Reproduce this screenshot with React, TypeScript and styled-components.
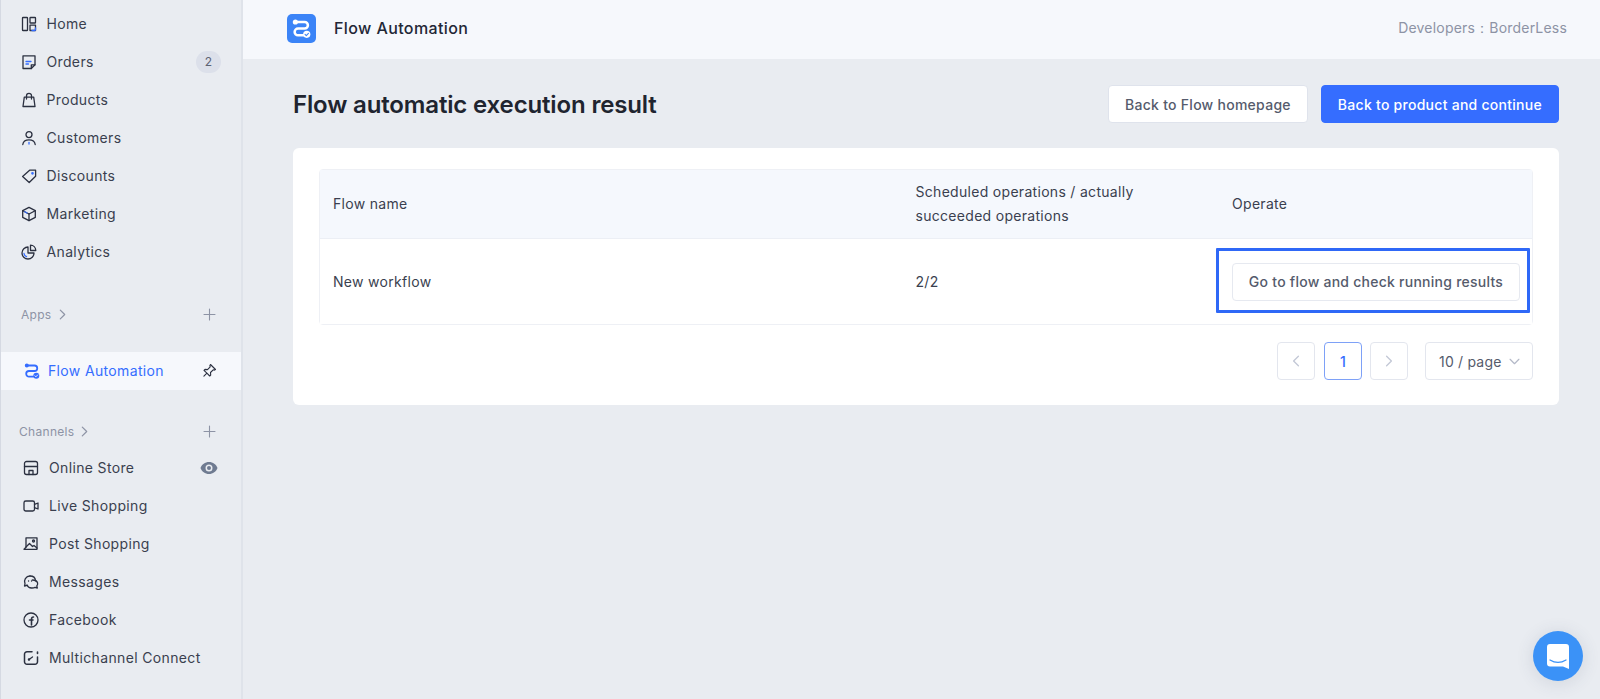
import React from "react";
import styled, { createGlobalStyle } from "styled-components";

const Global = createGlobalStyle`
  html, body { margin: 0; padding: 0; height: 100%; background: #e9ecf1; }
  #root { height: 100%; }
  * { box-sizing: border-box; }
  body { font-family: Inter, "Noto Sans", sans-serif; font-size: 14px; color: #2b3040; overflow: hidden; }
`;

const Shell = styled.div`
  display: flex;
  width: 1600px;
  height: 699px;
`;
const Sidebar = styled.aside`
  width: 243px;
  height: 699px;
  flex: none;
  padding-top: 5px;
  background: #e9ecf1;
  border-left: 1px solid #d5d9e2;
  border-right: 2px solid #dfe3ea;
`;
const NavRow = styled.div<{ $indent?: number; $active?: boolean; $right?: number }>`
  height: 38px;
  display: flex;
  align-items: center;
  padding-left: ${(p) => p.$indent ?? 20}px;
  padding-right: ${(p) => p.$right ?? 20}px;
  color: ${(p) => (p.$active ? "#356dff" : "#3a3f4f")};
  background: ${(p) => (p.$active ? "#f6f8fc" : "transparent")};
  font-size: 14px;
  line-height: 20px;
`;
const NavIcon = styled.svg<{ $gap?: number }>`
  width: 16px;
  height: 16px;
  flex: none;
  margin-right: ${(p) => p.$gap ?? 9.5}px;
  fill: none;
  stroke: #2b3040;
  stroke-width: 1.3;
  stroke-linejoin: round;
  stroke-linecap: round;
`;
const NavLabel = styled.span`
  flex: 1;
  letter-spacing: 0.35px;
`;
const Count = styled.span`
  width: 25px;
  height: 22px;
  border-radius: 11px;
  background: #dce0ea;
  color: #5c6273;
  font-size: 12px;
  display: flex;
  align-items: center;
  justify-content: center;
`;
const SectionHead = styled.div<{ $top: number; $bottom: number; $indent: number }>`
  height: 20px;
  margin-top: ${(p) => p.$top}px;
  margin-bottom: ${(p) => p.$bottom}px;
  padding-left: ${(p) => p.$indent}px;
  padding-right: 25px;
  display: flex;
  align-items: center;
  justify-content: space-between;
  color: #8d93a5;
  font-size: 12px;
  letter-spacing: 0.3px;
`;
const HeadLabel = styled.span`
  display: flex;
  align-items: center;
  gap: 5px;
`;
const Small = styled.svg`
  fill: none;
  stroke: #8d93a5;
  stroke-width: 1.1;
  stroke-linecap: round;
  stroke-linejoin: round;
  flex: none;
`;

const Main = styled.main`
  flex: 1;
  display: flex;
  flex-direction: column;
  min-width: 0;
`;
const TopBar = styled.header`
  height: 59px;
  flex: none;
  background: #f6f8fc;
  display: flex;
  align-items: center;
  padding: 0 33px 3px 44px;
`;
const TopTitle = styled.span`
  flex: 1;
  margin-left: 18px;
  font-size: 16px;
  font-weight: 500;
  letter-spacing: 0.4px;
  color: #232736;
`;
const Dev = styled.span`
  color: #8d93a5;
  font-size: 14px;
  letter-spacing: 0.2px;
`;
const Content = styled.div`
  padding: 26px 41px 0 50px;
`;
const Head = styled.div`
  display: flex;
  align-items: center;
  height: 38px;
`;
const Title = styled.h1`
  flex: 1;
  margin: 1px 0 0;
  font-size: 24px;
  line-height: 38px;
  font-weight: 600;
  letter-spacing: -0.15px;
  color: #20242f;
`;
const Btn = styled.button<{ $primary?: boolean }>`
  height: 38px;
  margin-left: 13px;
  padding: 0 16px;
  border-radius: 4px;
  font: 500 14px Inter, sans-serif;
  letter-spacing: 0.27px;
  background: ${(p) => (p.$primary ? "#356dff" : "#fff")};
  color: ${(p) => (p.$primary ? "#fff" : "#555b6c")};
  border: 1px solid ${(p) => (p.$primary ? "#356dff" : "#dfe3ec")};
`;
const Card = styled.section`
  margin-top: 25px;
  background: #fff;
  border-radius: 6px;
  height: 257px;
  padding: 21px 26px 0;
`;
const Table = styled.div`
  border: 1px solid #eef0f5;
  border-radius: 4px;
  height: 156px;
`;
const Row = styled.div<{ $head?: boolean }>`
  display: grid;
  grid-template-columns: 582.5px 316.5px 1fr;
  align-items: center;
  height: ${(p) => (p.$head ? 69 : 85)}px;
  background: ${(p) => (p.$head ? "#f5f8fd" : "#fff")};
  border-bottom: ${(p) => (p.$head ? "1px solid #eceff5" : "none")};
  color: #3a3f4f;
  font-size: 14px;
  line-height: 24px;
`;
const Cell = styled.div`
  padding-left: 13px;
  letter-spacing: 0.3px;
`;
const OpCell = styled.div`
  position: relative;
  padding-left: 13px;
`;
const Highlight = styled.div`
  position: absolute;
  left: -3px;
  top: -15px;
  width: 314px;
  height: 65px;
  border: 3px solid #2f68f7;
  border-radius: 1px;
  pointer-events: none;
`;
const RowBtn = styled.button`
  width: 288px;
  height: 38px;
  border: 1px solid #e6e9f0;
  border-radius: 4px;
  background: #fff;
  color: #555b6c;
  font: 500 14px Inter, sans-serif;
  letter-spacing: 0.25px;
  padding: 0;
`;
const Pager = styled.div`
  display: flex;
  justify-content: flex-end;
  margin-top: 17px;
`;
const PageBox = styled.div<{ $active?: boolean }>`
  width: 38px;
  height: 38px;
  margin-left: ${(p) => (p.$active ? 9 : 8)}px;
  border: 1px solid ${(p) => (p.$active ? "#7ea1f7" : "#e3e6ee")};
  border-radius: 4px;
  display: flex;
  align-items: center;
  justify-content: center;
  color: #356dff;
  font-size: 14px;
  font-weight: 500;
`;
const SizeBox = styled.div`
  width: 108px;
  height: 38px;
  margin-left: 17px;
  border: 1px solid #e3e6ee;
  border-radius: 4px;
  display: flex;
  align-items: center;
  justify-content: space-between;
  padding: 0 12px 0 13px;
  color: #555b6c;
  font-size: 14px;
  letter-spacing: 0.2px;
`;
const Chat = styled.div`
  position: fixed;
  left: 1533px;
  top: 631px;
  width: 50px;
  height: 50px;
  border-radius: 50%;
  background: #3b92f7;
  box-shadow: 0 2px 18px rgba(60, 70, 100, 0.14);
  display: flex;
  align-items: center;
  justify-content: center;
`;
const ChatGlyph = styled.svg`
  width: 22px;
  height: 25px;
`;

const Blue = "#356dff";

const Flowmark = ({ color, check, weight }: { color: string; check: string; weight: number }) => (
  <g fill="none" stroke={color} strokeWidth={weight} strokeLinecap="round" strokeLinejoin="round">
    <path d="M3 2.500h7.500a2.700 2.700 0 0 1 0 5.500H5a2.800 2.800 0 0 0 0 5.600h4.500" />
    <circle cx="2.800" cy="2.500" r="1.100" fill={color} />
    <circle cx="12.300" cy="12.800" r="3" fill={color} stroke="none" />
    <path d="M10.900 12.800l1 1 1.800-1.900" stroke={check} strokeWidth="0.9" />
  </g>
);

const items: [string, React.ReactNode, React.ReactNode?][] = [
  ["Home", <><rect x="1.500" y="1.500" width="5" height="13" rx="0.6" /><rect x="9" y="1.500" width="5.500" height="5.500" rx="0.6" /><path d="M9 9.200h5.500v5.300H9z" /><path d="M11 14.500h2.500a1 1 0 0 0 1-1V12" stroke={Blue} /></>],
  ["Orders", <><path d="M2 1.800h12v9l-3.700 3.700H2z" /><path d="M10.300 14.500v-3.700H14" /><path d="M5 7.500h5M5 10h2.500" stroke={Blue} /></>, <Count>2</Count>],
  ["Products", <><path d="M3.300 5.200h9.400l1.300 9.300H2z" /><path d="M5.500 7V3.800a2.500 2.500 0 0 1 5 0V7" /></>],
  ["Customers", <><circle cx="8" cy="4.600" r="3" /><path d="M1.800 14.500c.4-3.200 2.800-4.600 6.200-4.600s5.800 1.400 6.200 4.600" /><path d="M8 12.500v1.500" stroke={Blue} /></>],
  ["Discounts", <><path d="M8.600 2.200h6v6l-6.400 6.300L1.600 8.500z" /><circle cx="11.500" cy="5.300" r="0.7" stroke={Blue} /></>],
  ["Marketing", <><path d="M8 1.300l6.300 3.300v6.800L8 14.700l-6.300-3.300V4.600z" /><path d="M8 14.500V8" /><path d="M1.800 4.700L8 8l6.200-3.300" /><path d="M3.800 5.800L6 7" stroke={Blue} /></>],
  ["Analytics", <><path d="M7 3a6 6 0 1 0 6 6H7z" /><path d="M9.500 1.200a5.500 5.500 0 0 1 5.300 5.300H9.500z" /><path d="M3 9.500a4 4 0 0 0 2.500 3.200" stroke={Blue} /></>],
];

const channels: [string, React.ReactNode, React.ReactNode?][] = [
  ["Online Store", <><path d="M3.500 1.500h9a2 2 0 0 1 2 2v3h-13v-3a2 2 0 0 1 2-2z" /><path d="M1.500 6.500v6a2 2 0 0 0 2 2h9a2 2 0 0 0 2-2v-6" /><path d="M6 14.500v-4h4v4" /></>,
    <svg width="18" height="12" viewBox="0 0 18 12"><path d="M9 0C5 0 1.800 2.500.5 6c1.300 3.500 4.500 6 8.500 6s7.200-2.500 8.500-6C16.200 2.500 13 0 9 0zm0 9.500A3.500 3.500 0 1 1 9 2.500a3.500 3.500 0 0 1 0 7z" fill="#6f7b91" /><circle cx="9" cy="6" r="2" fill="#6f7b91" /></svg>],
  ["Live Shopping", <><rect x="1" y="3" width="10.500" height="10" rx="1.800" /><path d="M11.500 6.300l3.500-1.300v6l-3.500-1.300" /></>],
  ["Post Shopping", <><path d="M3 1.800h11v11.500H1l2-2V1.800z" /><circle cx="10.500" cy="5" r="1" /><path d="M3 11l3.500-3.500 3 3 1.500-1 3 2.500" /></>],
  ["Messages", <><path d="M7 2a5.500 5.500 0 0 0-5 7.800L1.500 12 4 11.300" /><path d="M7 2c3 0 5.300 2 5.500 4.800" /><path d="M4 11a5 5 0 0 0 5 3c1.300 0 2.300-.2 3-.6l2.300.6-.5-2c.8-1 1-2 .8-3-.5-2-2.500-3-5.300-3" /><path d="M5.500 7h.1M8.500 7h.1" /></>],
  ["Facebook", <><circle cx="8" cy="8" r="7" /><path d="M8.500 13V7.200c0-1.400.6-2.200 2-2.200M6.500 8h3.500" strokeWidth="1.600" /></>],
  ["Multichannel Connect", <><path d="M9 1.800H4a2.500 2.500 0 0 0-2.500 2.500v7.500A2.500 2.500 0 0 0 4 14.300h8a2.500 2.500 0 0 0 2.500-2.500V7" strokeWidth="1.500" /><path d="M14.500 2v1.500" strokeWidth="1.600" /><path d="M6 9.500l3.500-2.500" /><circle cx="6" cy="9.500" r="0.600" /></>],
];

const Chevron = ({ dir, color, size = 10 }: { dir: "l" | "r" | "d"; color: string; size?: number }) => (
  <svg width={size} height={size} viewBox="0 0 10 10" fill="none" stroke={color} strokeWidth="1.100" strokeLinecap="round" strokeLinejoin="round">
    <path d={dir === "l" ? "M7 1L3 5l4 4" : dir === "r" ? "M3 1l4 4-4 4" : "M1 3l4 4 4-4"} />
  </svg>
);

const Plus = () => (
  <Small width="13" height="13" viewBox="0 0 13 13"><path d="M6.500 1v11M1 6.500h11" /></Small>
);

export default function App() {
  return (
    <Shell>
      <Global />
      <Sidebar>
        {items.map(([label, icon, extra]) => (
          <NavRow key={label}>
            <NavIcon viewBox="0 0 16 16">{icon}</NavIcon>
            <NavLabel>{label}</NavLabel>
            {extra}
          </NavRow>
        ))}
        <SectionHead $top={33} $bottom={28} $indent={20}>
          <HeadLabel>Apps <Chevron dir="r" color="#8d93a5" size={11} /></HeadLabel>
          <Plus />
        </SectionHead>
        <NavRow $active $indent={23} $right={24}>
          <NavIcon viewBox="0 0 16 16" $gap={8} style={{ stroke: "none" }}>
            <Flowmark color={Blue} check="#f6f8fc" weight={1.8} />
          </NavIcon>
          <NavLabel>Flow Automation</NavLabel>
          <svg width="16" height="16" viewBox="0 0 16 16" fill="none" stroke="#2b3040" strokeWidth="1.100" strokeLinejoin="round" strokeLinecap="round">
            <path d="M9.500 1.500l5 5-1 .6-1.300-.3-2.700 2.700.2 2.500-1 1-2.800-2.800-3 3 3-3L3 7.400l1-1 2.500.2 2.700-2.700-.3-1.300z" />
          </svg>
        </NavRow>
        <SectionHead $top={31} $bottom={8} $indent={18}>
          <HeadLabel>Channels <Chevron dir="r" color="#8d93a5" size={11} /></HeadLabel>
          <Plus />
        </SectionHead>
        {channels.map(([label, icon, extra]) => (
          <NavRow key={label} $indent={22} $right={23}>
            <NavIcon viewBox="0 0 16 16" $gap={10}>{icon}</NavIcon>
            <NavLabel>{label}</NavLabel>
            {extra}
          </NavRow>
        ))}
      </Sidebar>
      <Main>
        <TopBar>
          <svg width="29" height="29" viewBox="0 0 29 29">
            <rect width="29" height="29" rx="5" fill="#3b84f7" />
            <g transform="translate(5 5) scale(1.200)">
              <Flowmark color="#fff" check="#3b84f7" weight={2.1} />
            </g>
          </svg>
          <TopTitle>Flow Automation</TopTitle>
          <Dev>Developers：BorderLess</Dev>
        </TopBar>
        <Content>
          <Head>
            <Title>Flow automatic execution result</Title>
            <Btn>Back to Flow homepage</Btn>
            <Btn $primary>Back to product and continue</Btn>
          </Head>
          <Card>
            <Table>
              <Row $head>
                <Cell>Flow name</Cell>
                <Cell>Scheduled operations / actually<br />succeeded operations</Cell>
                <Cell>Operate</Cell>
              </Row>
              <Row>
                <Cell>New workflow</Cell>
                <Cell>2/2</Cell>
                <OpCell>
                  <RowBtn>Go to flow and check running results</RowBtn>
                  <Highlight />
                </OpCell>
              </Row>
            </Table>
            <Pager>
              <PageBox><Chevron dir="l" color="#c3c8d6" size={12} /></PageBox>
              <PageBox $active>1</PageBox>
              <PageBox><Chevron dir="r" color="#c3c8d6" size={12} /></PageBox>
              <SizeBox>10 / page <Chevron dir="d" color="#b4b9c8" size={11} /></SizeBox>
            </Pager>
          </Card>
        </Content>
      </Main>
      <Chat>
        <ChatGlyph viewBox="0 0 22 25">
          <path d="M3 0h16a3 3 0 0 1 3 3v22l-6-2.500H3a3 3 0 0 1-3-3V3a3 3 0 0 1 3-3z" fill="#fff" />
          <path d="M3 16c5 3 11 3 16 0" fill="none" stroke="#3b92f7" strokeWidth="1.300" strokeLinecap="round" />
        </ChatGlyph>
      </Chat>
    </Shell>
  );
}
